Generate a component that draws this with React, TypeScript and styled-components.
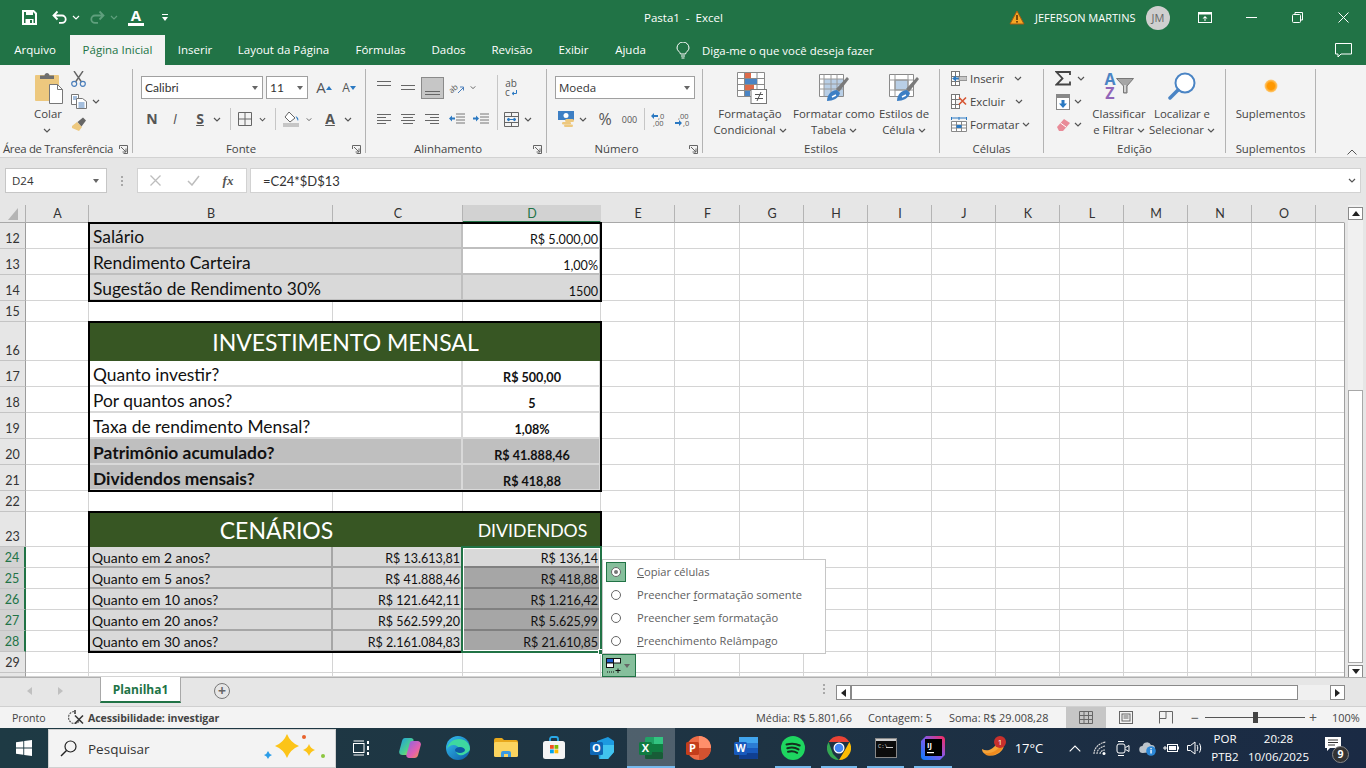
import React from "react";
import styled, { createGlobalStyle } from "styled-components";

const UI = `"Open Sans", "Noto Sans", sans-serif`;
const CAL = `Lato, "Open Sans", sans-serif`;
const GREEN = "#217346";

const Global = createGlobalStyle`
  html, body { margin: 0; padding: 0; background: #fff; }
  * { box-sizing: border-box; }
`;

const Root = styled.div`
  width: 1366px;
  height: 768px;
  overflow: hidden;
  display: flex;
  flex-direction: column;
  font-family: ${UI};
  color: #444;
`;

/* ---------- title bar ---------- */
const TitleBar = styled.div`
  height: 35px;
  background: ${GREEN};
  color: #fff;
  display: flex;
  align-items: center;
  flex: none;
`;
const Quick = styled.div`
  width: 300px;
  padding-left: 22px;
  display: flex;
  align-items: center;
  flex: none;
`;
const QuickSlot = styled.div<{ $w: number }>`
  width: ${(p) => p.$w}px;
  display: flex;
  align-items: center;
`;
const FontColorMark = styled.span`
  display: inline-block;
  font: 700 15px/13px ${UI};
  border-bottom: 3px solid #fff;
  width: 16px;
  text-align: center;
  height: 17px;
`;
const Title = styled.div`
  flex: 1;
  font-size: 11.5px;
  white-space: pre;
  padding-left: 344px;
`;
const UserBox = styled.div`
  display: flex;
  align-items: center;
  font-size: 11px;
  width: 357px;
  flex: none;
`;
const UserName = styled.span`
  margin: 0 9px 0 10px;
  width: 102px;
  white-space: nowrap;
`;
const Avatar = styled.span`
  width: 24px;
  height: 24px;
  border-radius: 50%;
  background: #cfcfcf;
  color: #666;
  font-size: 11px;
  display: flex;
  align-items: center;
  justify-content: center;
  flex: none;
`;
const WinBtn = styled.span<{ $w: number }>`
  width: ${(p) => p.$w}px;
  display: flex;
  justify-content: center;
  flex: none;
`;

/* ---------- tabs ---------- */
const TabRow = styled.div`
  height: 30px;
  background: ${GREEN};
  display: flex;
  align-items: center;
  flex: none;
  color: #fff;
  font-size: 11.5px;
`;
const Tab = styled.div<{ $w: number; $on?: boolean }>`
  width: ${(p) => p.$w}px;
  height: 30px;
  line-height: 30px;
  text-align: center;
  white-space: nowrap;
  flex: none;
  background: ${(p) => (p.$on ? "#f3f3f3" : "transparent")};
  color: ${(p) => (p.$on ? GREEN : "#fff")};
`;
const TellMe = styled.div`
  display: flex;
  align-items: center;
  height: 30px;
  gap: 12px;
  margin-left: 16px;
  width: 659px;
  flex: none;
  font-size: 11.4px;
`;

/* ---------- ribbon ---------- */
const Ribbon = styled.div`
  height: 92px;
  background: #f3f3f3;
  display: flex;
  padding-top: 4px;
  flex: none;
  font-size: 11.4px;
  color: #444;
`;
const Group = styled.div<{ $w: number }>`
  width: ${(p) => p.$w}px;
  height: 84px;
  border-right: 1px solid #b3b3b3;
  display: flex;
  flex-direction: column;
  flex: none;
`;
const GroupBody = styled.div<{ $pl?: number }>`
  height: 74px;
  display: flex;
  padding-left: ${(p) => p.$pl ?? 0}px;
`;
const GroupFoot = styled.div<{ $noLauncher?: boolean }>`
  height: 10px;
  display: flex;
  align-items: flex-start;
  padding-right: ${(p) => (p.$noLauncher ? 0 : 3)}px;
`;
const GroupName = styled.div<{ $tight?: boolean }>`
  flex: 1;
  text-align: center;
  line-height: 12px;
  white-space: nowrap;
  letter-spacing: ${(p) => (p.$tight ? "-0.3px" : "0")};
`;
const Launcher = styled.svg`
  margin: 2px 1px 0 3px;
  flex: none;
`;
const Column = styled.div<{ $gap?: number; $w?: number; $mt?: number; $ml?: number }>`
  display: flex;
  flex-direction: column;
  gap: ${(p) => p.$gap ?? 0}px;
  width: ${(p) => (p.$w ? `${p.$w}px` : "auto")};
  margin-top: ${(p) => p.$mt ?? 0}px;
  margin-left: ${(p) => p.$ml ?? 0}px;
`;
const Row = styled.div<{ $h?: number; $mt?: number; $gap?: number }>`
  display: flex;
  align-items: center;
  height: ${(p) => p.$h ?? 19}px;
  margin-top: ${(p) => p.$mt ?? 0}px;
  gap: ${(p) => p.$gap ?? 0}px;
  white-space: nowrap;
`;
const Slot = styled.div<{ $w: number; $ml?: number; $mt?: number }>`
  width: ${(p) => p.$w}px;
  margin-left: ${(p) => p.$ml ?? 0}px;
  margin-top: ${(p) => p.$mt ?? 0}px;
  display: flex;
  align-items: center;
  justify-content: center;
  flex: none;
`;
const Glyph = styled.span<{ $size?: number; $bold?: boolean; $italic?: boolean; $under?: boolean }>`
  font-family: ${UI};
  font-size: ${(p) => p.$size ?? 14}px;
  font-weight: ${(p) => (p.$bold ? 700 : 400)};
  font-style: ${(p) => (p.$italic ? "italic" : "normal")};
  text-decoration: ${(p) => (p.$under ? "underline" : "none")};
  color: #555;
  line-height: 1;
`;
const WrapMark = styled.div`
  display: flex;
  flex-direction: column;
  align-items: center;
  font-size: 10px;
  line-height: 9px;
  color: #555;
  padding-top: 1px;
`;
const SortLetters = styled.div`
  display: flex;
  flex-direction: column;
  align-items: center;
  font-weight: 700;
  font-size: 16px;
  line-height: 14px;
`;
const SortLetter = styled.span<{ $c: string }>`
  color: ${(p) => p.$c};
`;
const VSep = styled.div<{ $h?: number; $ml?: number; $mt?: number }>`
  width: 1px;
  height: ${(p) => p.$h ?? 22}px;
  background: #c6c6c6;
  margin-left: ${(p) => p.$ml ?? 0}px;
  margin-top: ${(p) => p.$mt ?? 0}px;
  flex: none;
`;
const Select = styled.div<{ $w: number; $ml?: number }>`
  width: ${(p) => p.$w}px;
  height: 23px;
  margin-left: ${(p) => p.$ml ?? 0}px;
  background: #fff;
  border: 1px solid #a0a0a0;
  display: flex;
  align-items: center;
  justify-content: space-between;
  padding: 0 4px 0 3px;
  font-size: 12px;
  color: #333;
  font-family: ${CAL};
  flex: none;
`;
const NumberSelect = styled(Select)`
  font-family: ${UI};
  font-size: 11.5px;
`;
const Caret = styled.span`
  width: 0;
  height: 0;
  border-left: 3.5px solid transparent;
  border-right: 3.5px solid transparent;
  border-top: 4px solid #666;
`;
const SelectedBox = styled.div`
  width: 23px;
  height: 22px;
  background: #c6c6c6;
  border: 1px solid #8a8a8a;
  display: flex;
  align-items: flex-end;
  justify-content: center;
  padding-bottom: 2px;
`;
const BigButton = styled.div<{ $w: number }>`
  width: ${(p) => p.$w}px;
  display: flex;
  flex-direction: column;
  align-items: center;
  line-height: 16px;
  white-space: nowrap;
  flex: none;
`;
const BigIcon = styled.div<{ $pt?: number; $ml?: number }>`
  height: 37px;
  padding-top: ${(p) => p.$pt ?? 3}px;
  margin-left: ${(p) => p.$ml ?? 0}px;
`;
const Collapse = styled.div`
  flex: 1;
  display: flex;
  align-items: flex-end;
  justify-content: flex-end;
  padding: 0 9px 0 0;
  height: 86px;
`;

/* ---------- formula bar ---------- */
const FormulaBar = styled.div`
  height: 48px;
  background: #e6e6e6;
  border-top: 1px solid #d2d2d2;
  padding-top: 10px;
  display: flex;
  align-items: flex-start;
  flex: none;
`;
const NameBox = styled.div`
  margin-left: 5px;
  width: 102px;
  height: 25px;
  background: #fff;
  border: 1px solid #c6c6c6;
  display: flex;
  align-items: center;
  justify-content: space-between;
  padding: 0 7px 0 6px;
  font-size: 11.5px;
  color: #333;
  flex: none;
`;
const Dots = styled.div`
  width: 30px;
  height: 25px;
  display: flex;
  flex-direction: column;
  align-items: center;
  justify-content: center;
  gap: 2px;
  flex: none;
  span {
    width: 2px;
    height: 2px;
    background: #a8a8a8;
  }
`;
const FxBox = styled.div`
  width: 110px;
  height: 25px;
  background: #fff;
  border: 1px solid #d2d2d2;
  display: flex;
  align-items: center;
  color: #555;
  flex: none;
`;
const FxMark = styled.span`
  font: italic 700 13px/1 "Liberation Serif", serif;
  color: #555;
`;
const FormulaInput = styled.div`
  margin-left: 3px;
  width: 1111px;
  height: 25px;
  background: #fff;
  border: 1px solid #d2d2d2;
  display: flex;
  align-items: center;
  justify-content: space-between;
  padding: 0 4px 0 12px;
  font-family: ${CAL};
  font-size: 13px;
  color: #333;
  flex: none;
`;

/* ---------- sheet ---------- */
const Sheet = styled.div`
  height: 472px;
  display: flex;
  position: relative;
  flex: none;
  background: #e6e6e6;
  overflow: hidden;
`;
const Grid = styled.div`
  width: 1345px;
  height: 472px;
  background: #fff;
  display: grid;
  grid-template-columns: 26px 63px 244px 130px 138px 74px 65px repeat(9, 64px) 29px;
  grid-template-rows: 18px 26px 26px 26px 21px 39px 26px 26px 26px 26px 26px 21px 35px 21px 21px 21px 21px 21px 21px 4px;
  flex: none;
`;
const Corner = styled.div`
  grid-row: 1;
  grid-column: 1;
  background: #e6e6e6;
  border-right: 1px solid #b0b0b0;
  border-bottom: 1px solid #a8a8a8;
  display: flex;
  align-items: flex-end;
  justify-content: flex-end;
  padding: 0 7px 2px 0;
`;
const ColHead = styled.div<{ $col: number; $on?: boolean; $blank?: boolean }>`
  grid-row: 1;
  grid-column: ${(p) => p.$col};
  background: ${(p) => (p.$on ? "#d2d2d2" : "#e6e6e6")};
  color: ${(p) => (p.$on ? GREEN : "#333")};
  border-right: 1px solid ${(p) => (p.$blank ? "#e6e6e6" : p.$on ? "#d2d2d2" : "#b4b4b4")};
  border-bottom: ${(p) => (p.$on ? `2px solid ${GREEN}` : "1px solid #a8a8a8")};
  font: 400 12.5px/17px ${CAL};
  text-align: center;
  padding-left: 1px;
`;
const RowHead = styled.div<{ $row: number; $on?: boolean }>`
  grid-row: ${(p) => p.$row};
  grid-column: 1;
  background: ${(p) => (p.$on ? "#d2d2d2" : "#e6e6e6")};
  color: ${(p) => (p.$on ? GREEN : "#333")};
  border-right: ${(p) => (p.$on ? `2px solid ${GREEN}` : "1px solid #9c9c9c")};
  border-bottom: 1px solid #c4c4c4;
  font: 400 12.5px/18px ${CAL};
  display: flex;
  align-items: flex-end;
  justify-content: center;
`;

type Tone = "plain" | "gray" | "white" | "paper" | "dark" | "band" | "calc" | "active" | "picked";
const TONES: Record<Tone, { bg: string; line: string; color: string }> = {
  plain: { bg: "#fff", line: "#d4d4d4", color: "#111" },
  gray: { bg: "#d9d9d9", line: "#bfbfbf", color: "#111" },
  white: { bg: "#fff", line: "#bfbfbf", color: "#111" },
  paper: { bg: "#fff", line: "#d9d9d9", color: "#111" },
  dark: { bg: "#bfbfbf", line: "#d9d9d9", color: "#111" },
  band: { bg: "#375623", line: "#375623", color: "#fff" },
  calc: { bg: "#d9d9d9", line: "#a6a6a6", color: "#111" },
  active: { bg: "#d9d9d9", line: "#808080", color: "#111" },
  picked: { bg: "#a6a6a6", line: "#808080", color: "#111" },
};
const Cell = styled.div<{
  $row: number;
  $col: number;
  $span?: number;
  $tone: Tone;
  $size?: number;
  $bold?: boolean;
  $align?: "left" | "right" | "center";
  $thick?: boolean;
  $pb?: number;
}>`
  grid-row: ${(p) => p.$row};
  grid-column: ${(p) => p.$col} / span ${(p) => p.$span ?? 1};
  background: ${(p) => TONES[p.$tone].bg};
  color: ${(p) => TONES[p.$tone].color};
  border-right: ${(p) => (p.$thick ? 2 : 1)}px solid ${(p) => TONES[p.$tone].line};
  border-bottom: ${(p) => (p.$thick ? 2 : 1)}px solid ${(p) => TONES[p.$tone].line};
  font: ${(p) => (p.$bold ? 700 : 400)} ${(p) => p.$size ?? 13}px/1.1 ${CAL};
  display: flex;
  align-items: flex-end;
  justify-content: ${(p) =>
    p.$align === "right" ? "flex-end" : p.$align === "center" ? "center" : "flex-start"};
  padding: 0 1px ${(p) => p.$pb ?? 0}px ${(p) => ((p.$size ?? 13) > 15 ? 4 : 3)}px;
  white-space: nowrap;
  overflow: hidden;
`;
const Frame = styled.div<{ $area: string }>`
  grid-area: ${(p) => p.$area};
  border: 2px solid #000;
  margin: -1px;
  z-index: 2;
  pointer-events: none;
`;
const RightEdge = styled.div`
  grid-area: 2 / 17 / 21 / 18;
  border-right: 1px solid #a0a0a0;
  pointer-events: none;
`;
const Selection = styled.div`
  grid-area: 14 / 5 / 19 / 6;
  border: 2px solid ${GREEN};
  margin: -1px -1px -1px -2px;
  box-shadow: inset 0 0 0 1px #fff;
  z-index: 3;
  position: relative;
  pointer-events: none;
`;
const Handle = styled.span`
  position: absolute;
  right: -4px;
  bottom: -4px;
  width: 6px;
  height: 6px;
  background: ${GREEN};
  border: 1px solid #fff;
`;
const VScroll = styled.div`
  width: 15px;
  margin-left: 3px;
  background: #f0f0f0;
  display: flex;
  flex-direction: column;
  padding-top: 2px;
  flex: none;
`;
const ScrollBtn = styled.div`
  width: 15px;
  height: 13px;
  background: #fff;
  border: 1px solid #8a8a8a;
  display: flex;
  align-items: center;
  justify-content: center;
  flex: none;
`;
const VThumb = styled.div`
  width: 15px;
  height: 273px;
  margin: 170px 0 2px;
  background: #fff;
  border: 1px solid #a8a8a8;
  flex: none;
`;
const Triangle = styled.span<{ $dir: "up" | "down" | "left" | "right" }>`
  width: 0;
  height: 0;
  border-style: solid;
  border-color: transparent;
  ${(p) =>
    p.$dir === "up"
      ? "border-width: 0 4px 5px; border-bottom-color: #222;"
      : p.$dir === "down"
        ? "border-width: 5px 4px 0; border-top-color: #222;"
        : p.$dir === "left"
          ? "border-width: 4px 5px 4px 0; border-right-color: #222;"
          : "border-width: 4px 0 4px 5px; border-left-color: #222;"}
`;
const PasteMenu = styled.div`
  position: absolute;
  left: 602px;
  top: 354px;
  width: 224px;
  height: 95px;
  background: #fff;
  border: 1px solid #c6c6c6;
  padding: 2px 0 0 3px;
  z-index: 5;
  display: flex;
  flex-direction: column;
  gap: 3px;
`;
const PasteItem = styled.div`
  height: 20px;
  display: flex;
  align-items: center;
  gap: 11px;
  font-size: 11.15px;
  color: #606060;
  white-space: nowrap;
`;
const PasteLabel = styled.span`
  margin-top: -2px;
`;
const RadioBox = styled.span<{ $on?: boolean }>`
  width: 20px;
  height: 20px;
  display: flex;
  align-items: center;
  justify-content: center;
  background: ${(p) => (p.$on ? "#86bf9c" : "transparent")};
  border: 1px solid ${(p) => (p.$on ? GREEN : "transparent")};
`;
const Radio = styled.span<{ $on?: boolean }>`
  width: 10px;
  height: 10px;
  border-radius: 50%;
  border: 1px solid #666;
  background: #fff;
  display: flex;
  align-items: center;
  justify-content: center;
  &::after {
    content: "";
    width: 4px;
    height: 4px;
    border-radius: 50%;
    background: ${(p) => (p.$on ? "#777" : "transparent")};
  }
`;
const PasteButton = styled.div`
  position: absolute;
  left: 602px;
  top: 449px;
  width: 34px;
  height: 23px;
  background: #86bf9c;
  border: 1px solid ${GREEN};
  z-index: 5;
  display: flex;
  align-items: center;
  justify-content: space-between;
  padding: 0 5px 0 3px;
`;

/* ---------- sheet tabs ---------- */
const SheetBar = styled.div`
  height: 29px;
  background: #e6e6e6;
  border-top: 1px solid #b0b0b0;
  display: flex;
  align-items: flex-start;
  flex: none;
`;
const NavArrow = styled.div<{ $w: number; $start?: boolean }>`
  width: ${(p) => p.$w}px;
  height: 26px;
  display: flex;
  align-items: center;
  justify-content: ${(p) => (p.$start ? "flex-start" : "center")};
  flex: none;
`;
const SheetTab = styled.div`
  width: 81px;
  height: 26px;
  margin-top: -1px;
  background: #fff;
  border: 1px solid #a8a8a8;
  border-top: none;
  border-bottom: 2px solid ${GREEN};
  font-size: 12px;
  font-weight: 700;
  color: ${GREEN};
  text-align: center;
  line-height: 25px;
  flex: none;
`;
const AddSheet = styled.div`
  width: 16px;
  height: 16px;
  margin: 5px 0 0 33px;
  border-radius: 50%;
  border: 1.5px solid #777;
  display: flex;
  align-items: center;
  justify-content: center;
  color: #666;
  font: 700 14px/14px ${UI};
  flex: none;
`;
const BarDots = styled(Dots)`
  width: 8px;
  height: 16px;
  margin: 3px 0 0 590px;
`;
const HScroll = styled.div`
  margin: 7px 0 0 8px;
  width: 509px;
  height: 15px;
  display: flex;
  background: #f0f0f0;
  flex: none;
`;
const HThumb = styled.div`
  width: 447px;
  height: 15px;
  background: #fff;
  border: 1px solid #8a8a8a;
`;
const HBtn = styled(ScrollBtn)`
  width: 15px;
  height: 15px;
`;
const HGap = styled.div`
  flex: 1;
`;

/* ---------- status bar ---------- */
const StatusBar = styled.div`
  height: 22px;
  background: #f3f3f3;
  border-top: 1px solid #d0d0d0;
  display: flex;
  align-items: center;
  flex: none;
  font-size: 10.9px;
  color: #444;
  white-space: nowrap;
`;
const StatusLeft = styled.div`
  width: 756px;
  display: flex;
  align-items: center;
  padding-left: 12px;
  flex: none;
  font-size: 10.6px;
`;
const Ready = styled.span`
  width: 56px;
`;
const A11y = styled.span`
  font-weight: 700;
  margin-left: 4px;
  color: #444;
  letter-spacing: -0.1px;
`;
const Stat = styled.span<{ $w: number }>`
  width: ${(p) => p.$w}px;
  flex: none;
`;
const ViewBtn = styled.div<{ $w: number; $on?: boolean }>`
  width: ${(p) => p.$w}px;
  height: 21px;
  display: flex;
  align-items: center;
  justify-content: center;
  background: ${(p) => (p.$on ? "#c6c6c6" : "transparent")};
  flex: none;
`;
const Zoomer = styled.div`
  width: 100px;
  height: 1px;
  background: #555;
  margin: 0 2px 0 4px;
  display: flex;
  justify-content: center;
  align-items: center;
  flex: none;
`;
const ZoomThumb = styled.span`
  width: 5px;
  height: 11px;
  background: #444;
`;
const ZoomMark = styled.span<{ $ml?: number }>`
  width: 12px;
  margin-left: ${(p) => p.$ml ?? 0}px;
  font-size: 14px;
  line-height: 1;
  text-align: center;
  color: #555;
  flex: none;
`;
const ZoomValue = styled.span`
  margin-left: 13px;
`;

/* ---------- taskbar ---------- */
const Taskbar = styled.div`
  height: 40px;
  background: linear-gradient(90deg, #1e3a44, #1e3343 55%, #1a2a44);
  display: flex;
  align-items: stretch;
  color: #fff;
  flex: none;
`;
const StartBtn = styled.div`
  width: 48px;
  display: flex;
  align-items: center;
  justify-content: center;
  flex: none;
`;
const SearchBox = styled.div`
  width: 288px;
  margin-top: 1px;
  background: #f3f3f3;
  border: 1px solid #d0d0d0;
  display: flex;
  align-items: center;
  padding-left: 11px;
  color: #333;
  font-size: 13.5px;
  gap: 11px;
  flex: none;
`;
const SearchArt = styled.svg`
  margin-left: 102px;
  flex: none;
`;
const TaskSlot = styled.div<{ $w: number; $run?: boolean; $active?: boolean }>`
  width: ${(p) => p.$w}px;
  flex: none;
  display: flex;
  align-items: center;
  justify-content: center;
  position: relative;
  background: ${(p) => (p.$active ? "rgba(255,255,255,0.22)" : "transparent")};
  &::after {
    content: "";
    display: ${(p) => (p.$run ? "block" : "none")};
    position: absolute;
    bottom: 0;
    left: ${(p) => (p.$active ? 0 : 5)}px;
    right: ${(p) => (p.$active ? 0 : 5)}px;
    height: 2px;
    background: #76b9ed;
  }
`;
const NoteSlot = styled(TaskSlot)`
  padding: 0 10px 8px 0;
`;
const Temp = styled.span`
  font-size: 13px;
`;
const TrayText = styled.div<{ $w: number }>`
  width: ${(p) => p.$w}px;
  flex: none;
  display: flex;
  flex-direction: column;
  align-items: center;
  justify-content: center;
  font-size: 11.5px;
  line-height: 18px;
`;
const Badge = styled.span`
  position: absolute;
  right: 6px;
  top: 8px;
  width: 12px;
  height: 12px;
  border-radius: 50%;
  background: #c8302c;
  color: #fff;
  font-size: 8px;
  line-height: 12px;
  text-align: center;
`;
const NoteBadge = styled.span`
  position: absolute;
  left: 18px;
  top: 18px;
  width: 17px;
  height: 17px;
  border-radius: 50%;
  background: #333;
  border: 1px solid #888;
  color: #fff;
  font-size: 10.5px;
  font-weight: 700;
  line-height: 15px;
  text-align: center;
`;

/* ---------- icons ---------- */
const Chev = ({ c = "#555" }: { c?: string }) => (
  <svg width="8" height="5" viewBox="0 0 8 5">
    <path d="M1 1l3 3 3-3" fill="none" stroke={c} strokeWidth="1.2" />
  </svg>
);
const Launch = () => (
  <Launcher width="9" height="9" viewBox="0 0 9 9">
    <path d="M.5 4V.5H8.5V8.5H4.5" fill="none" stroke="#666" />
    <path d="M2 2l5 5M7 3.5V7H3.5" fill="none" stroke="#666" />
  </Launcher>
);
const Foot = ({ name, launcher = true, tight }: { name: string; launcher?: boolean; tight?: boolean }) => (
  <GroupFoot $noLauncher={!launcher}>
    <GroupName $tight={tight}>{name}</GroupName>
    {launcher && <Launch />}
  </GroupFoot>
);
const Lines = ({ rows, w = 15 }: { rows: [number, number, number][]; w?: number }) => (
  <svg width={w} height="14" viewBox={`0 0 ${w} 14`}>
    {rows.map(([y, x, l], i) => (
      <rect key={i} x={x} y={y} width={l} height="1" fill="#666" />
    ))}
  </svg>
);
const Grid3 = ({ w = 16, h = 16 }: { w?: number; h?: number }) => (
  <g stroke="#777" fill="#fff">
    <rect x=".5" y=".5" width={w / 3} height={h / 3} />
    <rect x=".5" y={h / 3 + 0.5} width={w / 3} height={h / 3} />
    <rect x=".5" y={(2 * h) / 3 + 0.5} width={w / 3} height={h / 3 - 1} />
    <rect x={w / 3 + 0.5} y=".5" width={w / 3} height={h / 3} />
    <rect x={w / 3 + 0.5} y={(2 * h) / 3 + 0.5} width={w / 3} height={h / 3 - 1} />
  </g>
);

const QuickIcons = {
  save: (
    <svg width="15" height="15" viewBox="0 0 15 15">
      <path d="M1 1h10.5L14 3.5V14H1z" fill="none" stroke="#fff" strokeWidth="2" />
      <rect x="4" y="1" width="7" height="4" fill="#fff" />
      <rect x="3.5" y="9" width="8" height="5" fill="#fff" />
      <rect x="8" y="10" width="2" height="3" fill={GREEN} />
    </svg>
  ),
  undo: (
    <svg width="15" height="15" viewBox="0 0 15 15">
      <path d="M5.5 1.5L1.5 5.5l4 4M2 5.5h8a3.6 3.6 0 0 1 0 7.4H7" fill="none" stroke="#fff" strokeWidth="1.8" />
    </svg>
  ),
  redo: (
    <svg width="15" height="15" viewBox="0 0 15 15">
      <path d="M9.5 1.5l4 4-4 4M13 5.5H5a3.6 3.6 0 0 0 0 7.4h3" fill="none" stroke="#5f9f7d" strokeWidth="1.8" />
    </svg>
  ),
  custom: (
    <svg width="7" height="8" viewBox="0 0 7 8">
      <rect x="0" y="0" width="6" height="1" fill="#fff" />
      <path d="M0 3h6L3 7z" fill="#fff" />
    </svg>
  ),
  warn: (
    <svg width="16" height="15" viewBox="0 0 16 15">
      <path d="M8 1l7 13H1z" fill="#f5a623" stroke="#a65a10" />
      <rect x="7.2" y="5" width="1.6" height="5" fill="#5a3208" />
      <rect x="7.2" y="11" width="1.6" height="1.6" fill="#5a3208" />
    </svg>
  ),
  display: (
    <svg width="14" height="11" viewBox="0 0 14 11">
      <rect x=".5" y=".5" width="13" height="10" fill="none" stroke="#fff" />
      <rect x="1" y="1" width="12" height="1.5" fill="#fff" />
      <path d="M7 4L4.500 6.500h5zM6.500 6h1v3h-1z" fill="#fff" />
    </svg>
  ),
  min: (
    <svg width="11" height="2" viewBox="0 0 11 2">
      <rect width="11" height="1" fill="#fff" />
    </svg>
  ),
  max: (
    <svg width="11" height="11" viewBox="0 0 11 11">
      <path d="M3 2V.5h7.500V8H9" fill="none" stroke="#fff" />
      <rect x=".5" y="2.500" width="8" height="8" rx="1" fill="none" stroke="#fff" />
    </svg>
  ),
  close: (
    <svg width="11" height="11" viewBox="0 0 11 11">
      <path d="M.5.500l10 10M10.500.500l-10 10" stroke="#fff" />
    </svg>
  ),
  bulb: (
    <svg width="14" height="17" viewBox="0 0 14 17">
      <path d="M4.500 12C4 9.500 1 8.800 1 6a6 6 0 0 1 12 0c0 2.800-3 3.500-3.500 6z" fill="none" stroke="#fff" />
      <path d="M5 14h4M5.500 16h3" stroke="#fff" />
    </svg>
  ),
  comment: (
    <svg width="17" height="15" viewBox="0 0 17 15">
      <path d="M.5.500h16v10.500H6L3 14v-3H.5z" fill="none" stroke="#fff" />
    </svg>
  ),
};

const RibbonIcons = {
  paste: (
    <svg width="28" height="32" viewBox="0 0 28 32">
      <rect x="0" y="3" width="24" height="26" rx="1" fill="#edc87e" />
      <path d="M5 7V3.500h4.500c0-3.500 5-3.500 5 0H19V7z" fill="#6e6e6e" />
      <path d="M14.500 12.500h8l5 5v14h-13z" fill="#fff" stroke="#777" />
      <path d="M22.500 12.500v5h5" fill="none" stroke="#777" />
    </svg>
  ),
  scissors: (
    <svg width="15" height="16" viewBox="0 0 15 16">
      <path d="M3 0l7.500 11M12 0L4.500 11" stroke="#666" strokeWidth="1.4" fill="none" />
      <circle cx="3.2" cy="12.8" r="2.5" fill="none" stroke="#4a7ebb" strokeWidth="1.2" />
      <circle cx="11.8" cy="12.8" r="2.5" fill="none" stroke="#4a7ebb" strokeWidth="1.2" />
    </svg>
  ),
  copy: (
    <svg width="16" height="15" viewBox="0 0 16 15">
      <path d="M.5.500h7v10h-7z" fill="#fff" stroke="#777" />
      <path d="M5.500 4.500h6l4 3v7h-10z" fill="#fff" stroke="#777" />
      <path d="M2 3h4M2 5h3M7.500 9h6M7.500 11h6M7.500 13h6" stroke="#4a7ebb" />
    </svg>
  ),
  brush: (
    <svg width="16" height="15" viewBox="0 0 16 15">
      <path d="M1 9l5-4 5 5-3 4-7-3z" fill="#edc87e" />
      <path d="M6.500 5L12 .5l3 3L10.500 9.500z" fill="#666" />
    </svg>
  ),
  grow: (
    <svg width="6" height="4" viewBox="0 0 6 4">
      <path d="M3 0l3 4H0z" fill="#2b79c2" />
    </svg>
  ),
  shrink: (
    <svg width="6" height="4" viewBox="0 0 6 4">
      <path d="M0 0h6L3 4z" fill="#2b79c2" />
    </svg>
  ),
  borders: (
    <svg width="14" height="14" viewBox="0 0 14 14">
      <path d="M.5.500h13v13H.5zM7 .500v13M.5 7h13" fill="none" stroke="#666" />
    </svg>
  ),
  fill: (
    <svg width="17" height="16" viewBox="0 0 17 16">
      <path d="M6 1l6 6-5 4-5-5z" fill="#fff" stroke="#666" />
      <path d="M12.500 5c2.500 1 3.500 3 2.500 5z" fill="#2b79c2" />
      <rect x="0" y="12" width="16" height="4" fill="#c6c6c6" />
    </svg>
  ),
  orient: (
    <svg width="16" height="16" viewBox="0 0 16 16" overflow="visible">
      <text x="0" y="11" fontSize="8" fill="#555" fontFamily="Open Sans" transform="rotate(-40 5 9)">ab</text>
      <path d="M9 13l5-5M11 7h3.500v3.500" fill="none" stroke="#4a7ebb" />
    </svg>
  ),
  outdent: (
    <svg width="16" height="12" viewBox="0 0 16 12">
      <path d="M7 1h9M7 4h9M7 7h9M7 10h9" stroke="#777" />
      <path d="M0 5.500l3-3v2h3v2H3v2z" fill="#2b79c2" />
    </svg>
  ),
  indent: (
    <svg width="16" height="12" viewBox="0 0 16 12">
      <path d="M7 1h9M7 4h9M7 7h9M7 10h9" stroke="#777" />
      <path d="M6 5.500l-3-3v2H0v2h3v2z" fill="#2b79c2" />
    </svg>
  ),
  merge: (
    <svg width="15" height="15" viewBox="0 0 15 15">
      <path d="M.5.500h14v14H.5zM.5 4.500h14M.5 10.500h14M7.500.500v4M7.500 10.500v4" fill="none" stroke="#666" />
      <path d="M3 7.500h9M3 7.500l2-1.500v3zM12 7.500l-2-1.500v3z" stroke="#2b79c2" fill="#2b79c2" />
    </svg>
  ),
  currency: (
    <svg width="17" height="16" viewBox="0 0 17 16">
      <rect x="0" y="0" width="16" height="9" fill="#3d7fc4" />
      <circle cx="8" cy="4.500" r="2.500" fill="#fff" />
      <rect x="7" y="8" width="9" height="3" rx="1.500" fill="#edc87e" />
      <rect x="4" y="11" width="9" height="2.500" rx="1.200" fill="#edc87e" />
      <rect x="6" y="13.500" width="9" height="2.500" rx="1.200" fill="#edc87e" />
    </svg>
  ),
  decUp: (
    <svg width="16" height="15" viewBox="0 0 16 15">
      <text x="7" y="6.500" fontSize="7.500" fill="#555" fontFamily="Open Sans">,0</text>
      <text x="2" y="14" fontSize="7.500" fill="#555" fontFamily="Open Sans">,00</text>
      <path d="M0 4l3-3v2h4v2H3v2z" fill="#2b79c2" />
    </svg>
  ),
  decDown: (
    <svg width="16" height="15" viewBox="0 0 16 15">
      <text x="3" y="6.500" fontSize="7.500" fill="#555" fontFamily="Open Sans">,00</text>
      <text x="8" y="14" fontSize="7.500" fill="#555" fontFamily="Open Sans">,0</text>
      <path d="M7 11L4 8v2H0v2h4v2z" fill="#2b79c2" />
    </svg>
  ),
  conditional: (
    <svg width="30" height="32" viewBox="0 0 30 32">
      <path d="M.5.500h27v24H.5zM7.500.500v24M20 .500v24M.5 6.500h27M.5 12.500h27M.5 18.500h27" fill="#fff" stroke="#8a8a8a" />
      <rect x="8" y="1" width="6" height="5" fill="#dd6b4a" />
      <rect x="8" y="7" width="12" height="5" fill="#4a84c4" />
      <rect x="8" y="13" width="9" height="5" fill="#dd6b4a" />
      <rect x="8" y="19" width="5" height="5" fill="#4a84c4" />
      <rect x="14" y="17.500" width="15.500" height="14" fill="#fff" stroke="#777" />
      <path d="M18 22.500h8M18 26.500h8M24 20l-4 9" stroke="#555" fill="none" />
    </svg>
  ),
  tableFmt: (
    <svg width="30" height="30" viewBox="0 0 30 30">
      <path d="M.5 2.500h24v22H.5z" fill="#fff" stroke="#8a8a8a" />
      <rect x="5" y="7" width="19" height="17" fill="#b9cfe6" />
      <path d="M.5 7h24M.5 12h24M.5 17h24M5 2.500v22M12 2.500v22M18 2.500v22" stroke="#9a9a9a" fill="none" />
      <path d="M17 17L28 5l2 2-10 13z" fill="#7a7a7a" />
      <path d="M8 29c0-6 4-11 10-11l3 3c-1 5-7 8-13 8z" fill="#3d7fc4" />
      <path d="M13 25l4-2" stroke="#fff" strokeWidth="1.4" />
    </svg>
  ),
  cellStyle: (
    <svg width="30" height="30" viewBox="0 0 30 30">
      <path d="M.5 2.500h24v22H.5z" fill="#fff" stroke="#8a8a8a" />
      <rect x="6" y="8" width="13" height="10" fill="#b9cfe6" stroke="#8a8a8a" />
      <path d="M.5 8h24M.5 18h24M6 2.500v22M19 2.500v22" stroke="#9a9a9a" fill="none" />
      <path d="M17 17L28 5l2 2-10 13z" fill="#7a7a7a" />
      <path d="M8 29c0-6 4-11 10-11l3 3c-1 5-7 8-13 8z" fill="#3d7fc4" />
      <path d="M13 25l4-2" stroke="#fff" strokeWidth="1.4" />
    </svg>
  ),
  insert: (
    <svg width="16" height="16" viewBox="0 0 16 16">
      <Grid3 w={12} h={15} />
      <path d="M1 7.500l4-3v2h3v2H5v2z" fill="#2b79c2" />
      <rect x="8" y="5.500" width="8" height="4" fill="#c6c6c6" stroke="#777" strokeWidth=".7" />
    </svg>
  ),
  remove: (
    <svg width="16" height="16" viewBox="0 0 16 16">
      <Grid3 w={12} h={15} />
      <path d="M8 3.500l7 7M15 3.500l-7 7" stroke="#d65532" strokeWidth="1.6" />
    </svg>
  ),
  format: (
    <svg width="16" height="16" viewBox="0 0 16 16">
      <path d="M.5 1h15M.5 0v3M8 0v3M15.500 0v3" stroke="#2b79c2" />
      <path d="M.5 4.500h15v10H.5zM.5 8h15M.5 11h15M5.500 4.500v10M10.500 4.500v10" fill="#fff" stroke="#888" />
      <rect x="5.500" y="8" width="5" height="3" fill="#2b79c2" />
    </svg>
  ),
  sigma: (
    <svg width="16" height="15" viewBox="0 0 16 15">
      <path d="M15 4V1H1.500l6 6.500-6 6H15v-3" fill="none" stroke="#444" strokeWidth="1.8" />
    </svg>
  ),
  fillDown: (
    <svg width="14" height="16" viewBox="0 0 14 16">
      <rect x=".5" y=".5" width="13" height="15" fill="#fff" stroke="#888" />
      <rect x="1" y="1" width="12" height="3" fill="#888" />
      <path d="M7 14L3 9.500h2.500V6h3v3.500H11z" fill="#2b79c2" />
    </svg>
  ),
  eraser: (
    <svg width="15" height="14" viewBox="0 0 15 14">
      <path d="M1 9l7-8 6 4-7 8H3z" fill="#e98b98" />
      <path d="M4.500 5L10 9" stroke="#fff" />
    </svg>
  ),
  funnel: (
    <svg width="18" height="16" viewBox="0 0 18 16">
      <path d="M.5.500h17L11 8v7H7.500V8z" fill="#a6a6a6" stroke="#777" />
      <path d="M9 7v7" stroke="#fff" />
    </svg>
  ),
  find: (
    <svg width="28" height="28" viewBox="0 0 28 28">
      <circle cx="17" cy="11" r="9.500" fill="#fff" stroke="#4a84c4" strokeWidth="2" />
      <path d="M10 18L2 26" stroke="#4a84c4" strokeWidth="3.500" strokeLinecap="round" />
    </svg>
  ),
  addin: (
    <svg width="14" height="14" viewBox="0 0 14 14">
      <defs>
        <radialGradient id="addinDot">
          <stop offset="0.55" stopColor="#ff9800" />
          <stop offset="1" stopColor="#ffcf80" />
        </radialGradient>
      </defs>
      <circle cx="7" cy="7" r="6.500" fill="url(#addinDot)" />
    </svg>
  ),
  wrapArrow: (
    <svg width="6" height="6" viewBox="0 0 6 6">
      <path d="M5.500 0v3.500H1.500M3 2L1 3.500 3 5" fill="none" stroke="#2b79c2" />
    </svg>
  ),
};

const star = (cx: number, cy: number, r: number, f = 0.18) => {
  const k = r * f;
  return `M${cx} ${cy - r}Q${cx + k} ${cy - k} ${cx + r} ${cy}Q${cx + k} ${cy + k} ${cx} ${cy + r}Q${cx - k} ${cy + k} ${cx - r} ${cy}Q${cx - k} ${cy - k} ${cx} ${cy - r}Z`;
};

const TaskIcons = {
  windows: (
    <svg width="16" height="16" viewBox="0 0 16 16" fill="#fff">
      <path d="M0 2.300L7.300 1.200V7.600H0zM8.200 1L16 0V7.600H8.200zM0 8.400H7.300V14.800L0 13.700zM8.200 8.400H16V16L8.200 14.900z" />
    </svg>
  ),
  lens: (
    <svg width="17" height="17" viewBox="0 0 17 17">
      <circle cx="10.500" cy="6.500" r="5.500" fill="none" stroke="#222" strokeWidth="1.200" />
      <path d="M6.500 10.500L1 16" stroke="#222" strokeWidth="1.400" />
    </svg>
  ),
  taskView: (
    <svg width="16" height="16" viewBox="0 0 16 16">
      <rect x=".5" y="3.500" width="10.500" height="9" fill="none" stroke="#fff" />
      <path d="M.5 1h10.500M.5 15h10.500" stroke="#fff" />
      <rect x="14" y="1" width="2" height="3" fill="#fff" />
      <rect x="14" y="6" width="2" height="4" fill="#fff" />
      <rect x="14" y="12" width="2" height="3" fill="#fff" />
    </svg>
  ),
  copilot: (
    <svg width="22" height="20" viewBox="0 0 22 20">
      <defs>
        <linearGradient id="cpA" x1="0" y1="0" x2="1" y2="1">
          <stop offset="0" stopColor="#1b9de2" />
          <stop offset="0.6" stopColor="#4ecf8d" />
          <stop offset="1" stopColor="#e9d22e" />
        </linearGradient>
        <linearGradient id="cpB" x1="0" y1="0" x2="1" y2="1">
          <stop offset="0" stopColor="#8466e5" />
          <stop offset="0.6" stopColor="#e45fb0" />
          <stop offset="1" stopColor="#f29b3f" />
        </linearGradient>
      </defs>
      <path d="M6 0h6c1.500 0 2.300 1 2.600 2l-3.500 12c-.5 2-2 3-4 3H3.500C1 17-.3 15 .3 13L3 3C3.500 1 4.500 0 6 0z" fill="url(#cpA)" />
      <path d="M13 3h5.500c2.300 0 3.900 2 3.300 4l-2.700 10c-.5 2-1.700 3-3.500 3H10c-1.500 0-2.500-1-2.800-2.200L10.500 6C11 4 11.500 3 13 3z" fill="url(#cpB)" />
    </svg>
  ),
  edge: (
    <svg width="24" height="24" viewBox="0 0 24 24">
      <defs>
        <linearGradient id="edgeA" x1="0" y1="0" x2="1" y2="1">
          <stop offset="0" stopColor="#35c1f1" />
          <stop offset="1" stopColor="#0c59a4" />
        </linearGradient>
      </defs>
      <circle cx="12" cy="12" r="12" fill="url(#edgeA)" />
      <path d="M24 13C24 7 19 3 13 3 7 3 2 7 1 13c2-4 7-5 10-3 3 2 2 6-1 5 0 3 5 6 9 3 3-2 5-3 5-5z" fill="#3ed8a0" />
      <ellipse cx="14" cy="14" rx="5" ry="3" fill="#0c59a4" />
    </svg>
  ),
  explorer: (
    <svg width="24" height="22" viewBox="0 0 24 22">
      <path d="M0 3a2 2 0 0 1 2-2h6l2 2h12a2 2 0 0 1 2 2v2H0z" fill="#e8a81c" />
      <rect x="0" y="5" width="24" height="15" rx="1.500" fill="#fbd45f" />
      <path d="M7 20v-4a2 2 0 0 1 2-2h6a2 2 0 0 1 2 2v4h-3v-3h-4v3z" fill="#3b9ae1" />
    </svg>
  ),
  store: (
    <svg width="24" height="24" viewBox="0 0 24 24">
      <path d="M8 6V3a2 2 0 0 1 2-2h4a2 2 0 0 1 2 2v3" fill="none" stroke="#29a9e8" strokeWidth="1.800" />
      <rect x="1" y="5" width="22" height="18" rx="2.500" fill="#f4f4f4" />
      <rect x="8" y="9" width="3.800" height="3.800" fill="#f25022" />
      <rect x="12.500" y="9" width="3.800" height="3.800" fill="#7fba00" />
      <rect x="8" y="13.500" width="3.800" height="3.800" fill="#00a4ef" />
      <rect x="12.500" y="13.500" width="3.800" height="3.800" fill="#ffb900" />
    </svg>
  ),
  outlook: (
    <svg width="24" height="22" viewBox="0 0 24 22">
      <path d="M7 4l11-4 6 4v11l-6 7H9z" fill="#1d9ae0" />
      <path d="M12 8h12v7l-6 7H10z" fill="#41c4ef" />
      <rect x="0" y="5" width="13" height="13" rx="1.500" fill="#0f67b5" />
      <text x="6.500" y="15.300" fontSize="11" fontWeight="700" fill="#fff" textAnchor="middle" fontFamily="Open Sans">O</text>
    </svg>
  ),
  excel: (
    <svg width="24" height="22" viewBox="0 0 24 22">
      <rect x="6" y="0" width="18" height="22" rx="1.500" fill="#21a366" />
      <rect x="15" y="0" width="9" height="7" fill="#33c481" />
      <rect x="6" y="7" width="18" height="8" fill="#107c41" />
      <rect x="6" y="15" width="18" height="7" rx="1" fill="#185c37" />
      <rect x="0" y="5" width="13" height="13" rx="1.500" fill="#107c41" />
      <text x="6.500" y="15.300" fontSize="11" fontWeight="700" fill="#fff" textAnchor="middle" fontFamily="Open Sans">X</text>
    </svg>
  ),
  ppt: (
    <svg width="25" height="24" viewBox="0 0 25 24">
      <circle cx="13" cy="12" r="12" fill="#ed6c47" />
      <path d="M13 0a12 12 0 0 1 12 12H13z" fill="#ff8f6b" />
      <path d="M13 12h12a12 12 0 0 1-12 12z" fill="#d35230" />
      <rect x="0" y="6" width="13" height="13" rx="1.500" fill="#c43e1c" />
      <text x="6.500" y="16.300" fontSize="11" fontWeight="700" fill="#fff" textAnchor="middle" fontFamily="Open Sans">P</text>
    </svg>
  ),
  word: (
    <svg width="24" height="22" viewBox="0 0 24 22">
      <rect x="5" y="0" width="19" height="22" rx="1.500" fill="#2b7cd3" />
      <rect x="5" y="0" width="19" height="6" fill="#41a5ee" />
      <rect x="5" y="11" width="19" height="6" fill="#185abd" />
      <rect x="5" y="16" width="19" height="6" rx="1" fill="#103f91" />
      <rect x="0" y="5" width="13" height="13" rx="1.500" fill="#185abd" />
      <text x="6.500" y="15.300" fontSize="10.500" fontWeight="700" fill="#fff" textAnchor="middle" fontFamily="Open Sans">W</text>
    </svg>
  ),
  spotify: (
    <svg width="24" height="24" viewBox="0 0 24 24">
      <circle cx="12" cy="12" r="12" fill="#1ed760" />
      <path d="M5.500 8.500c4.500-1.300 9.500-1 13.200 1M6.300 12.300c3.800-1.100 8-.8 11.200 1.100M7 15.800c3.200-.9 6.500-.6 9.200 1" fill="none" stroke="#14301f" strokeWidth="2" strokeLinecap="round" />
    </svg>
  ),
  chrome: (
    <svg width="24" height="24" viewBox="-12 -12 24 24">
      <path d="M0-12A12 12 0 0 1 10.400-6H0z M-10.400-6A12 12 0 0 1 0-12V-6z" fill="#ea4335" />
      <path d="M-10.400-6L-6 6 0 12A12 12 0 0 1-10.400-6z" fill="#34a853" />
      <path d="M10.400-6A12 12 0 0 1 0 12L6 2z" fill="#fbbc05" />
      <circle r="5.500" fill="#fff" />
      <circle r="4.300" fill="#4285f4" />
    </svg>
  ),
  cmd: (
    <svg width="22" height="20" viewBox="0 0 22 20">
      <rect x=".5" y=".5" width="21" height="19" fill="#0c0c0c" stroke="#888" />
      <rect x="1" y="1" width="20" height="2" fill="#cfcfcf" />
      <text x="3" y="10" fontSize="5.500" fill="#ccc" fontFamily="Liberation Mono">C:\</text>
      <rect x="11" y="9" width="7" height="1" fill="#ccc" />
    </svg>
  ),
  idea: (
    <svg width="24" height="24" viewBox="0 0 24 24">
      <defs>
        <linearGradient id="ideaA" x1="0" y1="1" x2="1" y2="0">
          <stop offset="0" stopColor="#087cfa" />
          <stop offset="0.5" stopColor="#7b5cf0" />
          <stop offset="1" stopColor="#fe2857" />
        </linearGradient>
      </defs>
      <path d="M5 0h15a4 4 0 0 1 4 4v15l-5 5H4a4 4 0 0 1-4-4V5z" fill="url(#ideaA)" />
      <rect x="4" y="3" width="17" height="17" fill="#000" />
      <text x="6" y="12" fontSize="7.500" fontWeight="700" fill="#fff" fontFamily="Open Sans">IJ</text>
      <rect x="6" y="16" width="7" height="1.200" fill="#fff" />
    </svg>
  ),
  weather: (
    <svg width="24" height="18" viewBox="0 0 24 18">
      <path d="M1 10c5 3 12 1 16-8 5-3 7 1 6 5-2 8-12 12-19 8-2-1-3-3-3-5z" fill="#f5a338" />
      <path d="M4 14c7 1 13-3 16-8l2 2c-3 6-10 10-17 8z" fill="#ef8b1f" />
    </svg>
  ),
  up: (
    <svg width="12" height="7" viewBox="0 0 12 7">
      <path d="M.7 6.300L6 1l5.300 5.300" fill="none" stroke="#fff" strokeWidth="1.100" />
    </svg>
  ),
  wifi: (
    <svg width="14" height="14" viewBox="0 0 14 14">
      <path d="M1 13C1 7 6 2 13 1M4 13c0-4 3-7 8-8M7 13c0-2 2-4 5-4" fill="none" stroke="#ddd" strokeWidth="1.100" strokeDasharray="2 .6" />
      <circle cx="11" cy="12.500" r="1.500" fill="#fff" />
    </svg>
  ),
  cam: (
    <svg width="14" height="17" viewBox="0 0 14 17">
      <rect x="1" y="4" width="8" height="9" rx="2" fill="none" stroke="#fff" />
      <path d="M9.500 7.500L13 5.500v6L9.500 9.500" fill="none" stroke="#fff" />
      <path d="M2 1.500h6M2 15.500h6" stroke="#fff" />
    </svg>
  ),
  cloud: (
    <svg width="17" height="15" viewBox="0 0 17 15">
      <path d="M4 12a3.500 3.500 0 0 1-.5-7A4.500 4.500 0 0 1 12 4a3.500 3.500 0 0 1 1 7z" fill="#bcc4cb" />
      <circle cx="12" cy="10" r="4.800" fill="#2b88d8" />
      <rect x="11.400" y="9" width="1.300" height="3.500" fill="#fff" />
      <rect x="11.400" y="7" width="1.300" height="1.300" fill="#fff" />
    </svg>
  ),
  battery: (
    <svg width="16" height="10" viewBox="0 0 16 10">
      <rect x="4.500" y="1.500" width="10" height="7" fill="none" stroke="#fff" />
      <rect x="6" y="3" width="7" height="4" fill="#fff" />
      <rect x="15" y="3.500" width="1" height="3" fill="#fff" />
      <path d="M0 5h4M2 3v4" stroke="#fff" />
    </svg>
  ),
  volume: (
    <svg width="16" height="14" viewBox="0 0 16 14">
      <path d="M.5 4.500h3L8 1v12L3.500 9.500h-3z" fill="none" stroke="#fff" />
      <path d="M10 4c1 2 1 4 0 6M12.500 2.500c1.600 3 1.600 6 0 9" fill="none" stroke="#fff" />
    </svg>
  ),
  note: (
    <svg width="16" height="14" viewBox="0 0 16 14">
      <path d="M0 0h16v11H5l-3 3v-3H0z" fill="#fff" />
      <path d="M3 3h10M3 5.500h10M3 8h7" stroke="#333" />
    </svg>
  ),
};

const StatusIcons = {
  a11y: (
    <svg width="16" height="15" viewBox="0 0 16 15">
      <path d="M6 1.500A6 6 0 1 0 12 10" fill="none" stroke="#555" strokeWidth="1.200" strokeDasharray="2 1" />
      <path d="M7 0v4M7 5.500l8 8M15 5.500l-8 8" stroke="#333" strokeWidth="1.500" fill="none" />
    </svg>
  ),
  normal: (
    <svg width="14" height="13" viewBox="0 0 14 13">
      <path d="M.5.500h13v12H.5zM5 .500v12M9.500 .500v12M.5 4.500h13M.5 8.500h13" fill="none" stroke="#666" />
    </svg>
  ),
  page: (
    <svg width="14" height="13" viewBox="0 0 14 13">
      <rect x=".5" y=".5" width="13" height="12" fill="none" stroke="#666" />
      <rect x="3" y="3" width="8" height="7" fill="none" stroke="#666" />
      <path d="M4.500 5h5M4.500 7h5" stroke="#666" />
    </svg>
  ),
  breakPage: (
    <svg width="14" height="13" viewBox="0 0 14 13">
      <path d="M.5 12.500V.500h13v12M.5 7.500h6.500V.500" fill="none" stroke="#666" />
    </svg>
  ),
  pasteOpts: (
    <svg width="16" height="15" viewBox="0 0 16 15">
      <rect x=".5" y=".5" width="7" height="4.500" fill="#1f5fd0" stroke="#111" />
      <rect x="7.500" y=".5" width="7" height="4.500" fill="#fff" stroke="#111" />
      <rect x=".5" y="5" width="7" height="4.500" fill="#fff" stroke="#111" />
      <path d="M1 14h8" stroke="#111" strokeDasharray="1 1" />
      <path d="M12 10.500v4.500M9.500 12.500h5" stroke="#111" />
    </svg>
  ),
};

/* ---------- sheet data ---------- */
type CellDef = {
  col: number;
  span?: number;
  text?: string;
  tone: Tone;
  size?: number;
  bold?: boolean;
  align?: "left" | "right" | "center";
  pb?: number;
};
const COLS = ["A", "B", "C", "D", "E", "F", "G", "H", "I", "J", "K", "L", "M", "N", "O", ""];

const LABEL = 17.4;
const tableOne = (label: string, value: string, tone: Tone): CellDef[] => [
  { col: 3, span: 2, text: label, tone: "gray", size: LABEL, pb: 1 },
  { col: 5, text: value, tone, size: 12.6, align: "right" },
];
const tableTwo = (label: string, value: string, tone: Tone): CellDef[] => [
  { col: 3, span: 2, text: label, tone, size: LABEL, bold: tone === "dark", pb: 1 },
  { col: 5, text: value, tone, size: 12.6, bold: true, align: "center" },
];
const scenario = (label: string, value: string, div: string, tone: Tone): CellDef[] => [
  { col: 3, text: label, tone: "calc", size: 13.9, pb: 1 },
  { col: 4, text: value, tone: "calc", size: 12.5, align: "right" },
  { col: 5, text: div, tone, size: 12.5, align: "right" },
];

const ROWS: { n: number; gridRow: number; cells: CellDef[] }[] = [
  { n: 12, gridRow: 2, cells: tableOne("Salário", "R$ 5.000,00", "white") },
  { n: 13, gridRow: 3, cells: tableOne("Rendimento Carteira", "1,00%", "white") },
  { n: 14, gridRow: 4, cells: tableOne("Sugestão de Rendimento 30%", "1500", "gray") },
  { n: 15, gridRow: 5, cells: [] },
  {
    n: 16,
    gridRow: 6,
    cells: [{ col: 3, span: 3, text: "INVESTIMENTO MENSAL", tone: "band", size: 23, align: "center", pb: 4 }],
  },
  { n: 17, gridRow: 7, cells: tableTwo("Quanto investir?", "R$ 500,00", "paper") },
  { n: 18, gridRow: 8, cells: tableTwo("Por quantos anos?", "5", "paper") },
  { n: 19, gridRow: 9, cells: tableTwo("Taxa de rendimento Mensal?", "1,08%", "paper") },
  { n: 20, gridRow: 10, cells: tableTwo("Patrimônio acumulado?", "R$ 41.888,46", "dark") },
  { n: 21, gridRow: 11, cells: tableTwo("Dividendos mensais?", "R$ 418,88", "dark") },
  { n: 22, gridRow: 12, cells: [] },
  {
    n: 23,
    gridRow: 13,
    cells: [
      { col: 3, span: 2, text: "CENÁRIOS", tone: "band", size: 23, align: "center", pb: 2 },
      { col: 5, text: "DIVIDENDOS", tone: "band", size: 17.7, align: "center", pb: 5 },
    ],
  },
  { n: 24, gridRow: 14, cells: scenario("Quanto em 2 anos?", "R$ 13.613,81", "R$ 136,14", "active") },
  { n: 25, gridRow: 15, cells: scenario("Quanto em 5 anos?", "R$ 41.888,46", "R$ 418,88", "picked") },
  { n: 26, gridRow: 16, cells: scenario("Quanto em 10 anos?", "R$ 121.642,11", "R$ 1.216,42", "picked") },
  { n: 27, gridRow: 17, cells: scenario("Quanto em 20 anos?", "R$ 562.599,20", "R$ 5.625,99", "picked") },
  { n: 28, gridRow: 18, cells: scenario("Quanto em 30 anos?", "R$ 2.161.084,83", "R$ 21.610,85", "picked") },
  { n: 29, gridRow: 19, cells: [] },
  { n: 30, gridRow: 20, cells: [] },
];

const columnsOf = (cells: CellDef[]): CellDef[] => {
  const taken = new Set<number>();
  cells.forEach((c) => {
    for (let i = 0; i < (c.span ?? 1); i++) taken.add(c.col + i);
  });
  const blanks: CellDef[] = [];
  for (let col = 2; col <= 17; col++) if (!taken.has(col)) blanks.push({ col, tone: "plain" });
  return [...cells, ...blanks];
};

const TASK_APPS = [
  { w: 49, icon: TaskIcons.taskView },
  { w: 49, icon: TaskIcons.copilot },
  { w: 48, icon: TaskIcons.edge },
  { w: 47.5, icon: TaskIcons.explorer },
  { w: 48, icon: TaskIcons.store },
  { w: 49.5, icon: TaskIcons.outlook },
  { w: 48, icon: TaskIcons.excel, run: true, active: true },
  { w: 47, icon: TaskIcons.ppt },
  { w: 47.5, icon: TaskIcons.word },
  { w: 46.5, icon: TaskIcons.spotify, run: true },
  { w: 46, icon: TaskIcons.chrome, run: true },
  { w: 47, icon: TaskIcons.cmd, run: true },
  { w: 48, icon: TaskIcons.idea, run: true },
];
const TABS = [
  { w: 70, name: "Arquivo" },
  { w: 95, name: "Página Inicial", on: true },
  { w: 60, name: "Inserir" },
  { w: 117, name: "Layout da Página" },
  { w: 77, name: "Fórmulas" },
  { w: 59, name: "Dados" },
  { w: 68, name: "Revisão" },
  { w: 55, name: "Exibir" },
  { w: 59, name: "Ajuda" },
];

export default function App() {
  return (
    <Root>
      <Global />
      <TitleBar>
        <Quick>
          <QuickSlot $w={30}>{QuickIcons.save}</QuickSlot>
          <QuickSlot $w={20}>{QuickIcons.undo}</QuickSlot>
          <QuickSlot $w={18}><Chev c="#fff" /></QuickSlot>
          <QuickSlot $w={20}>{QuickIcons.redo}</QuickSlot>
          <QuickSlot $w={18}><Chev c="#5f9f7d" /></QuickSlot>
          <QuickSlot $w={34}><FontColorMark>A</FontColorMark></QuickSlot>
          <QuickSlot $w={10}>{QuickIcons.custom}</QuickSlot>
        </Quick>
        <Title>Pasta1  -  Excel</Title>
        <UserBox>
          {QuickIcons.warn}
          <UserName>JEFERSON MARTINS</UserName>
          <Avatar>JM</Avatar>
          <WinBtn $w={70}>{QuickIcons.display}</WinBtn>
          <WinBtn $w={22}>{QuickIcons.min}</WinBtn>
          <WinBtn $w={70}>{QuickIcons.max}</WinBtn>
          <WinBtn $w={22}>{QuickIcons.close}</WinBtn>
        </UserBox>
      </TitleBar>
      <TabRow>
        {TABS.map((t) => (
          <Tab key={t.name} $w={t.w} $on={t.on}>
            {t.name}
          </Tab>
        ))}
        <TellMe>
          {QuickIcons.bulb}
          <span>Diga-me o que você deseja fazer</span>
        </TellMe>
        {QuickIcons.comment}
      </TabRow>

      <Ribbon>
        <Group $w={133}>
          <GroupBody>
            <Column $w={30} $ml={33}>
              <BigIcon $ml={2}>{RibbonIcons.paste}</BigIcon>
              <BigButton $w={30}>Colar</BigButton>
              <Slot $w={28} $mt={6}><Chev /></Slot>
            </Column>
            <Column $gap={4} $ml={8}>
              <Row>{RibbonIcons.scissors}</Row>
              <Row>
                {RibbonIcons.copy}
                <Slot $w={8} $ml={5}><Chev /></Slot>
              </Row>
              <Row>{RibbonIcons.brush}</Row>
            </Column>
          </GroupBody>
          <Foot name="Área de Transferência" tight />
        </Group>

        <Group $w={233}>
          <GroupBody $pl={8}>
            <Column $mt={7}>
              <Row $h={23}>
                <Select $w={122}>Calibri<Caret /></Select>
                <Select $w={42} $ml={3}>11<Caret /></Select>
                <Slot $w={24} $ml={4}>
                  <Glyph $size={15}>A</Glyph>
                  {RibbonIcons.grow}
                </Slot>
                <Slot $w={20} $ml={3}>
                  <Glyph $size={12}>A</Glyph>
                  {RibbonIcons.shrink}
                </Slot>
              </Row>
              <Row $h={20} $mt={10}>
                <Slot $w={22}><Glyph $bold>N</Glyph></Slot>
                <Slot $w={24}><Glyph $italic>I</Glyph></Slot>
                <Slot $w={26}><Glyph $bold $under>S</Glyph></Slot>
                <Slot $w={8}><Chev /></Slot>
                <VSep $ml={9} />
                <Slot $w={28}>{RibbonIcons.borders}</Slot>
                <Slot $w={7}><Chev /></Slot>
                <VSep $ml={9} />
                <Slot $w={30}>{RibbonIcons.fill}</Slot>
                <Slot $w={6}><Chev /></Slot>
                <Slot $w={36}><Glyph $bold $size={14} $under>A</Glyph></Slot>
                <Slot $w={8} $ml={-4}><Chev /></Slot>
              </Row>
            </Column>
          </GroupBody>
          <Foot name="Fonte" />
        </Group>

        <Group $w={181}>
          <GroupBody $pl={6}>
            <Column $w={125} $mt={7}>
              <Row $h={23}>
                <Slot $w={24}><Lines rows={[[0, 0, 14], [4, 0, 14]]} /></Slot>
                <Slot $w={24}><Lines rows={[[4, 0, 14], [8, 0, 14]]} /></Slot>
                <Slot $w={24}>
                  <SelectedBox><Lines rows={[[9, 0, 15], [12, 0, 15]]} /></SelectedBox>
                </Slot>
                <Slot $w={26}>{RibbonIcons.orient}</Slot>
                <Slot $w={6}><Chev /></Slot>
              </Row>
              <Row $h={20} $mt={10}>
                <Slot $w={24}><Lines rows={[[2, 0, 14], [5, 0, 9], [8, 0, 14], [11, 0, 9]]} /></Slot>
                <Slot $w={24}><Lines rows={[[2, 0, 14], [5, 2, 10], [8, 0, 14], [11, 2, 10]]} /></Slot>
                <Slot $w={24}><Lines rows={[[2, 0, 14], [5, 5, 9], [8, 0, 14], [11, 5, 9]]} /></Slot>
                <Slot $w={26}>{RibbonIcons.outdent}</Slot>
                <Slot $w={22}>{RibbonIcons.indent}</Slot>
              </Row>
            </Column>
            <VSep $h={55} $mt={6} />
            <Column $mt={7}>
              <Row $h={23}>
                <Slot $w={26}>
                  <WrapMark>
                    <span>ab</span>
                    <Row $h={9} $gap={1}>c{RibbonIcons.wrapArrow}</Row>
                  </WrapMark>
                </Slot>
              </Row>
              <Row $h={20} $mt={10}>
                <Slot $w={26}>{RibbonIcons.merge}</Slot>
                <Slot $w={8}><Chev /></Slot>
              </Row>
            </Column>
          </GroupBody>
          <Foot name="Alinhamento" />
        </Group>

        <Group $w={156}>
          <GroupBody $pl={8}>
            <Column $mt={7}>
              <Row $h={23}>
                <NumberSelect $w={140}>Moeda<Caret /></NumberSelect>
              </Row>
              <Row $h={20} $mt={10}>
                <Slot $w={23}>{RibbonIcons.currency}</Slot>
                <Slot $w={10}><Chev /></Slot>
                <Slot $w={34}><Glyph $size={16}>%</Glyph></Slot>
                <Slot $w={15}><Glyph $size={9}>000</Glyph></Slot>
                <VSep $ml={7} />
                <Slot $w={28}>{RibbonIcons.decUp}</Slot>
                <Slot $w={20}>{RibbonIcons.decDown}</Slot>
              </Row>
            </Column>
          </GroupBody>
          <Foot name="Número" />
        </Group>

        <Group $w={237}>
          <GroupBody $pl={6}>
            <BigButton $w={82}>
              <BigIcon $ml={3}>{RibbonIcons.conditional}</BigIcon>
              Formatação
              <Row $h={16} $gap={3}>Condicional <Chev /></Row>
            </BigButton>
            <BigButton $w={86}>
              <BigIcon>{RibbonIcons.tableFmt}</BigIcon>
              Formatar como
              <Row $h={16} $gap={3}>Tabela <Chev /></Row>
            </BigButton>
            <BigButton $w={54}>
              <BigIcon>{RibbonIcons.cellStyle}</BigIcon>
              Estilos de
              <Row $h={16} $gap={3}>Célula <Chev /></Row>
            </BigButton>
          </GroupBody>
          <Foot name="Estilos" launcher={false} />
        </Group>

        <Group $w={104}>
          <GroupBody $pl={11}>
            <Column $gap={4}>
              <Row $gap={3}>
                {RibbonIcons.insert}Inserir
                <Slot $w={8} $ml={7}><Chev /></Slot>
              </Row>
              <Row $gap={3}>
                {RibbonIcons.remove}Excluir
                <Slot $w={8} $ml={7}><Chev /></Slot>
              </Row>
              <Row $gap={3}>
                {RibbonIcons.format}Formatar
                <Slot $w={8}><Chev /></Slot>
              </Row>
            </Column>
          </GroupBody>
          <Foot name="Células" launcher={false} />
        </Group>

        <Group $w={182}>
          <GroupBody $pl={11}>
            <Column $gap={4} $w={35}>
              <Row>
                {RibbonIcons.sigma}
                <Slot $w={8} $ml={6}><Chev /></Slot>
              </Row>
              <Row>
                <Slot $w={16}>{RibbonIcons.fillDown}</Slot>
                <Slot $w={8} $ml={3}><Chev /></Slot>
              </Row>
              <Row>
                <Slot $w={16}>{RibbonIcons.eraser}</Slot>
                <Slot $w={8} $ml={3}><Chev /></Slot>
              </Row>
            </Column>
            <BigButton $w={58}>
              <BigIcon>
                <Row $h={28}>
                  <SortLetters>
                    <SortLetter $c="#4a84c4">A</SortLetter>
                    <SortLetter $c="#9065b8">Z</SortLetter>
                  </SortLetters>
                  {RibbonIcons.funnel}
                </Row>
              </BigIcon>
              Classificar
              <Row $h={16} $gap={3}>e Filtrar <Chev /></Row>
            </BigButton>
            <BigButton $w={68}>
              <BigIcon>{RibbonIcons.find}</BigIcon>
              Localizar e
              <Row $h={16} $gap={3}>Selecionar <Chev /></Row>
            </BigButton>
          </GroupBody>
          <Foot name="Edição" launcher={false} />
        </Group>

        <Group $w={90}>
          <GroupBody>
            <BigButton $w={89}>
              <BigIcon $pt={10}>{RibbonIcons.addin}</BigIcon>
              Suplementos
            </BigButton>
          </GroupBody>
          <Foot name="Suplementos" launcher={false} />
        </Group>
        <Collapse>
          <svg width="10" height="6" viewBox="0 0 10 6">
            <path d="M.5 5.500L5 1l4.500 4.500" fill="none" stroke="#555" />
          </svg>
        </Collapse>
      </Ribbon>

      <FormulaBar>
        <NameBox>D24<Caret /></NameBox>
        <Dots><span /><span /><span /></Dots>
        <FxBox>
          <Slot $w={34}>
            <svg width="11" height="11" viewBox="0 0 11 11">
              <path d="M.5.500l10 10M10.500.500l-10 10" stroke="#bdbdbd" strokeWidth="1.300" />
            </svg>
          </Slot>
          <Slot $w={42}>
            <svg width="13" height="11" viewBox="0 0 13 11">
              <path d="M1 6l4 4 7-9" fill="none" stroke="#bdbdbd" strokeWidth="1.500" />
            </svg>
          </Slot>
          <Slot $w={28}><FxMark>fx</FxMark></Slot>
        </FxBox>
        <FormulaInput>
          =C24*$D$13
          <Chev />
        </FormulaInput>
      </FormulaBar>

      <Sheet>
        <Grid>
          <Corner>
            <svg width="10" height="12" viewBox="0 0 10 12">
              <path d="M10 0v12H0z" fill="#b4b4b4" />
            </svg>
          </Corner>
          {COLS.map((c, i) => (
            <ColHead key={i} $col={i + 2} $on={c === "D"} $blank={c === ""}>{c}</ColHead>
          ))}
          {ROWS.map((r) => (
            <React.Fragment key={r.n}>
              <RowHead $row={r.gridRow} $on={r.n >= 24 && r.n <= 28}>{r.n < 30 ? r.n : ""}</RowHead>
              {columnsOf(r.cells).map((c) => (
                <Cell
                  key={c.col}
                  $row={r.gridRow}
                  $col={c.col}
                  $span={c.span}
                  $tone={c.tone}
                  $size={c.size}
                  $bold={c.bold}
                  $align={c.align}
                  $pb={c.pb}
                  $thick={c.tone !== "plain"}
                >
                  {c.text}
                </Cell>
              ))}
            </React.Fragment>
          ))}
          <RightEdge />
          <Frame $area="2 / 3 / 5 / 6" />
          <Frame $area="6 / 3 / 12 / 6" />
          <Frame $area="13 / 3 / 19 / 6" />
          <Selection><Handle /></Selection>
        </Grid>
        <VScroll>
          <ScrollBtn><Triangle $dir="up" /></ScrollBtn>
          <VThumb />
          <ScrollBtn><Triangle $dir="down" /></ScrollBtn>
        </VScroll>
        <PasteMenu>
          <PasteItem>
            <RadioBox $on><Radio $on /></RadioBox>
            <PasteLabel><u>C</u>opiar células</PasteLabel>
          </PasteItem>
          <PasteItem>
            <RadioBox><Radio /></RadioBox>
            <PasteLabel>Preencher <u>f</u>ormatação somente</PasteLabel>
          </PasteItem>
          <PasteItem>
            <RadioBox><Radio /></RadioBox>
            <PasteLabel>Preencher <u>s</u>em formatação</PasteLabel>
          </PasteItem>
          <PasteItem>
            <RadioBox><Radio /></RadioBox>
            <PasteLabel><u>P</u>reenchimento Relâmpago</PasteLabel>
          </PasteItem>
        </PasteMenu>
        <PasteButton>
          {StatusIcons.pasteOpts}
          <Caret />
        </PasteButton>
      </Sheet>

      <SheetBar>
        <NavArrow $w={58}>
          <svg width="5" height="8" viewBox="0 0 5 8"><path d="M5 0v8L0 4z" fill="#c0c0c0" /></svg>
        </NavArrow>
        <NavArrow $w={42} $start>
          <svg width="5" height="8" viewBox="0 0 5 8"><path d="M0 0v8l5-4z" fill="#c0c0c0" /></svg>
        </NavArrow>
        <SheetTab>Planilha1</SheetTab>
        <AddSheet>+</AddSheet>
        <BarDots><span /><span /><span /></BarDots>
        <HScroll>
          <HBtn><Triangle $dir="left" /></HBtn>
          <HThumb />
          <HGap />
          <HBtn><Triangle $dir="right" /></HBtn>
        </HScroll>
      </SheetBar>

      <StatusBar>
        <StatusLeft>
          <Ready>Pronto</Ready>
          {StatusIcons.a11y}
          <A11y>Acessibilidade: investigar</A11y>
        </StatusLeft>
        <Stat $w={112}>Média: R$ 5.801,66</Stat>
        <Stat $w={81}>Contagem: 5</Stat>
        <Stat $w={117}>Soma: R$ 29.008,28</Stat>
        <ViewBtn $w={40} $on>{StatusIcons.normal}</ViewBtn>
        <ViewBtn $w={40}>{StatusIcons.page}</ViewBtn>
        <ViewBtn $w={40}>{StatusIcons.breakPage}</ViewBtn>
        <ZoomMark $ml={3}>−</ZoomMark>
        <Zoomer><ZoomThumb /></Zoomer>
        <ZoomMark>+</ZoomMark>
        <ZoomValue>100%</ZoomValue>
      </StatusBar>

      <Taskbar>
        <StartBtn>{TaskIcons.windows}</StartBtn>
        <SearchBox>
          {TaskIcons.lens}
          <span>Pesquisar</span>
          <SearchArt width="64" height="30" viewBox="0 0 64 30">
            <path d={star(24, 12, 12, 0.28)} fill="#fcc419" />
            <path d={star(46, 16, 6, 0.25)} fill="#fcc419" />
            <path d={star(5, 21, 4, 0.25)} fill="#2b9de8" />
            <circle cx="41" cy="3" r="2" fill="#e8622c" />
            <circle cx="60" cy="22" r="2" fill="#8cc63f" />
          </SearchArt>
        </SearchBox>
        {TASK_APPS.map((a, i) => (
          <TaskSlot key={i} $w={a.w} $run={a.run} $active={a.active}>
            {a.icon}
          </TaskSlot>
        ))}
        <TaskSlot $w={17} />
        <TaskSlot $w={38}>
          {TaskIcons.weather}
          <Badge>1</Badge>
        </TaskSlot>
        <TaskSlot $w={34}><Temp>17°C</Temp></TaskSlot>
        <TaskSlot $w={14} />
        <TaskSlot $w={30}>{TaskIcons.up}</TaskSlot>
        <TaskSlot $w={20}>{TaskIcons.wifi}</TaskSlot>
        <TaskSlot $w={26}>{TaskIcons.cam}</TaskSlot>
        <TaskSlot $w={22}>{TaskIcons.cloud}</TaskSlot>
        <TaskSlot $w={25}>{TaskIcons.battery}</TaskSlot>
        <TaskSlot $w={24}>{TaskIcons.volume}</TaskSlot>
        <TrayText $w={36}>
          <span>POR</span>
          <span>PTB2</span>
        </TrayText>
        <TrayText $w={71}>
          <span>20:28</span>
          <span>10/06/2025</span>
        </TrayText>
        <NoteSlot $w={48}>
          {TaskIcons.note}
          <NoteBadge>9</NoteBadge>
        </NoteSlot>
      </Taskbar>
    </Root>
  );
}
